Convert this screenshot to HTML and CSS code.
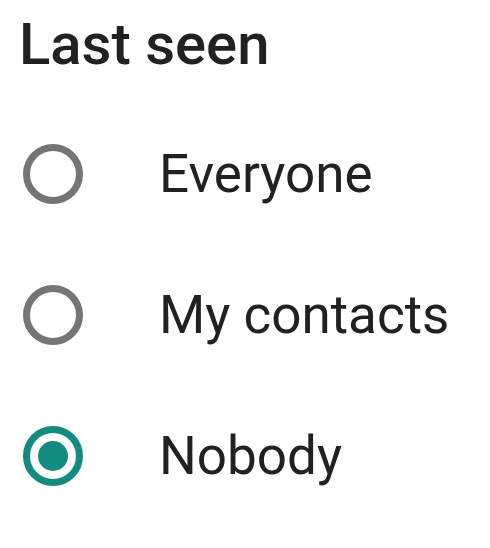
FILE: index.html
```html
<!DOCTYPE html>
<html>
<head>
<meta charset="utf-8">
<link rel="stylesheet" href="styles.css">
</head>
<body>
<div class="dialog">
  <h1 class="title">Last seen</h1>
  <div class="options">
    <div class="option">
      <span class="radio"></span>
      <span class="label">Everyone</span>
    </div>
    <div class="option">
      <span class="radio"></span>
      <span class="label">My contacts</span>
    </div>
    <div class="option">
      <span class="radio checked"></span>
      <span class="label">Nobody</span>
    </div>
  </div>
</div>
</body>
</html>
```
FILE: styles.css
```css
html, body {
  margin: 0;
  padding: 0;
  background: #ffffff;
}
.dialog {
  width: 490px;
  height: 548px;
  font-family: Roboto, "Noto Sans", sans-serif;
  color: #212121;
}
.title {
  margin: 0;
  padding: 8px 0 0 19px;
  font-size: 58px;
  font-weight: 500;
  line-height: 72px;
  letter-spacing: 0;
}
.options {
  display: flex;
  flex-direction: column;
  margin-top: 23px;
}
.option {
  display: flex;
  align-items: center;
  height: 141px;
}
.radio {
  box-sizing: border-box;
  width: 60px;
  height: 60px;
  margin-left: 23px;
  border: 7px solid #757575;
  border-radius: 50%;
  display: flex;
  align-items: center;
  justify-content: center;
  flex: none;
}
.radio.checked {
  border-color: #128c7e;
}
.radio.checked::after {
  content: "";
  width: 30px;
  height: 30px;
  border-radius: 50%;
  background: #128c7e;
}
.label {
  margin-left: 76px;
  font-size: 53px;
  line-height: 64px;
  color: #212121;
}
```
